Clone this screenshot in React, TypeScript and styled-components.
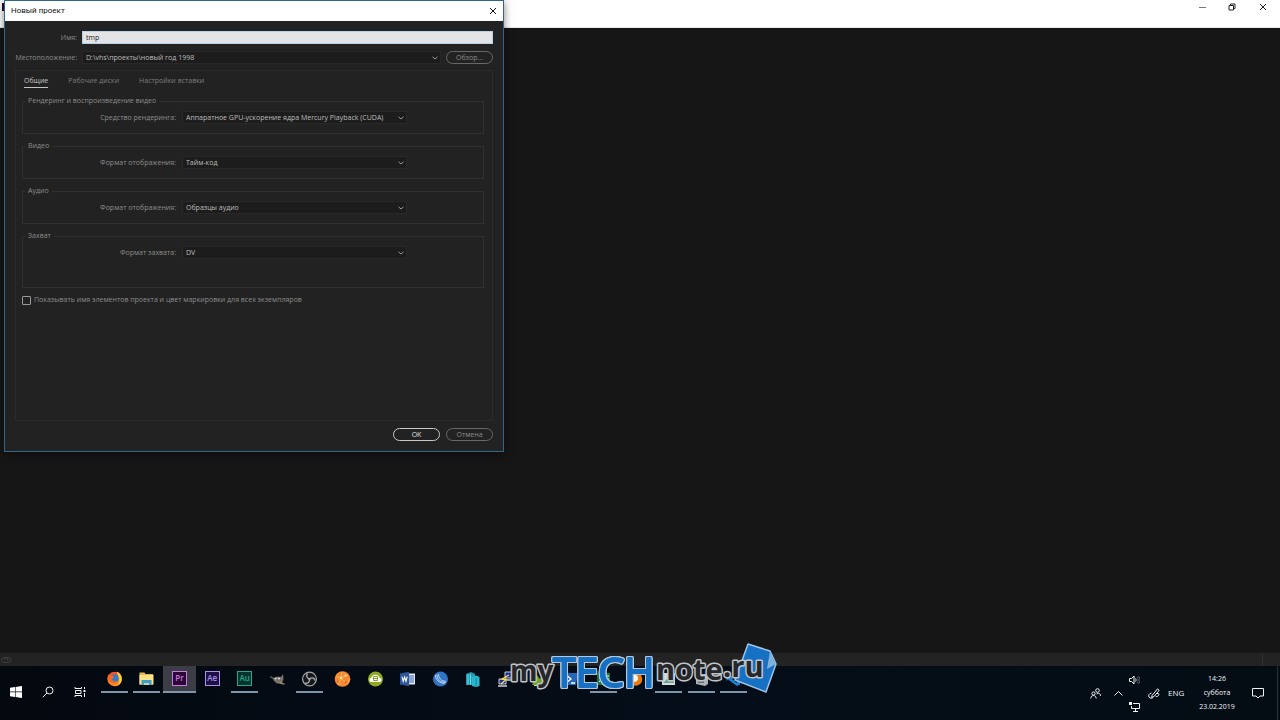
import React from "react";
import styled, { createGlobalStyle } from "styled-components";

const Global = createGlobalStyle`
  * { box-sizing: border-box; }
  body { margin: 0; background: #161616; }
  body, button, input, select {
    font-family: "Open Sans", "Noto Sans", sans-serif;
    font-size: 7px;
    line-height: 10px;
  }
  button { padding: 0; border: 0; background: none; color: inherit; }
`;

const Screen = styled.div`
  position: relative;
  display: flex;
  flex-direction: column;
  min-height: 100vh;
  overflow: hidden;
  background: #161616;
`;

const WindowBar = styled.header`
  display: flex;
  justify-content: space-between;
  height: 28px;
  padding-right: 1px;
  background: #fff;
  border-bottom: 1px solid #e4e8e8;
`;

const AppMark = styled.span`
  width: 8px;
  height: 8px;
  margin: 3px 0 0 2px;
  background: #2a0640;
`;

const WindowControls = styled.div`
  display: flex;
  height: 14px;
`;

const WindowButton = styled.button`
  display: grid;
  place-items: center;
  width: 30px;
  color: #222;

  & + &:last-child { width: 32px; }
`;

const Workspace = styled.main`
  flex: 1;
`;

const StatusBar = styled.div`
  display: flex;
  align-items: center;
  justify-content: space-between;
  height: 13px;
  padding: 0 17px 0 1px;
  background: #232323;
  color: #3c3c3c;
`;

const StatusGrip = styled.span`
  width: 1px;
  height: 13px;
  background: #303030;
`;

const Dialog = styled.section`
  position: absolute;
  top: 0;
  left: 4px;
  width: 500px;
  display: flex;
  flex-direction: column;
  border: 1px solid #35648a;
  background: #222;
  color: #8c8c8c;
  box-shadow: 0 2px 8px rgba(0, 0, 0, 0.5);
`;

const DialogTitle = styled.div`
  display: flex;
  align-items: center;
  justify-content: space-between;
  height: 20px;
  padding: 0 5px 1px 6px;
  background: #fff;
  color: #111;
`;

const TitleText = styled.h1`
  margin: 0;
  font-family: Roboto, "Open Sans", sans-serif;
  font-size: 8px;
  font-weight: 400;
  line-height: 12px;
`;

const CloseButton = styled.button`
  display: grid;
  place-items: center;
  width: 10px;
  height: 12px;
`;

const DialogBody = styled.form`
  display: flex;
  flex-direction: column;
  padding: 10px;
`;

const HeadRow = styled.div`
  display: grid;
  grid-template-columns: 62px 1fr auto;
  column-gap: 5px;
  align-items: center;
  height: 13px;
  margin-bottom: 7px;
`;

const FieldLabel = styled.label`
  text-align: right;
  white-space: nowrap;
`;

const NameInput = styled.input`
  grid-column: 2 / 4;
  width: 100%;
  height: 13px;
  padding: 0 3px;
  border: 1px solid #b4d3ea;
  border-radius: 0;
  outline: 0;
  background: #e4e4e6;
  color: #222;
`;

const SelectBox = styled.div`
  display: grid;
  align-items: center;
  height: 13px;
  color: #999;

  & > * { grid-area: 1 / 1; }
  & > svg { justify-self: end; margin-right: 3px; pointer-events: none; }
`;

const Select = styled.select`
  appearance: none;
  width: 100%;
  height: 13px;
  padding: 0 3px;
  border: 1px solid #282828;
  border-radius: 0;
  outline: 0;
  background: #1c1c1c;
  color: #bdbdbd;
`;

const PillButton = styled.button<{ $primary?: boolean }>`
  width: 47px;
  height: 13px;
  border: 1px solid ${(p) => (p.$primary ? "#c8c8c8" : "#686868")};
  border-radius: 7px;
  color: ${(p) => (p.$primary ? "#e0e0e0" : "#8c8c8c")};
`;

const Panel = styled.div`
  display: flex;
  flex-direction: column;
  min-height: 351px;
  margin-top: -1px;
  padding: 4px 8px 0 6px;
  border: 1px solid #2b2b2b;
`;

const Tabs = styled.div`
  display: flex;
  gap: 20px;
  padding-left: 2px;
  margin-bottom: 8px;
`;

const Tab = styled.button<{ $active?: boolean }>`
  height: 13px;
  border-bottom: 1px solid ${(p) => (p.$active ? "#c4c4c4" : "transparent")};
  color: ${(p) => (p.$active ? "#c4c4c4" : "#7c7c7c")};
`;

const Group = styled.fieldset<{ $tall?: boolean }>`
  min-width: 0;
  height: ${(p) => (p.$tall ? 57 : 38)}px;
  margin: 0 0 7px;
  padding: 5px 0 0;
  border: 1px solid #303030;
`;

const GroupTitle = styled.legend`
  margin-left: 2px;
  padding: 0 3px;
`;

const GroupRow = styled.div`
  display: grid;
  grid-template-columns: 153px 225px;
  column-gap: 6px;
  align-items: center;
`;

const CheckRow = styled.label`
  display: flex;
  align-items: center;
  gap: 3px;
  height: 10px;
`;

const CheckBox = styled.input`
  appearance: none;
  width: 9px;
  height: 9px;
  margin: 0;
  border: 1px solid #999;
  border-radius: 1px;

  &:checked { background: #999; }
`;

const Actions = styled.div`
  display: flex;
  justify-content: flex-end;
  gap: 6px;
  margin-top: 7px;
`;

const Taskbar = styled.footer`
  display: flex;
  justify-content: space-between;
  height: 54px;
  padding-right: 2px;
  background: linear-gradient(90deg, #040910, #050d18 55%, #040c14);
  color: #f0f3f6;
`;

const TaskGroup = styled.div`
  display: flex;
`;

const SystemButton = styled.button`
  display: grid;
  place-items: center;
  width: 32px;
  height: 52px;
`;

const AppGrid = styled.nav`
  display: grid;
  grid-template-columns: repeat(20, 1fr);
  width: 652px;
  height: 27px;
  margin-left: 2px;
`;

const AppButton = styled.button<{ $running?: boolean; $active?: boolean }>`
  display: flex;
  flex-direction: column;
  align-items: center;
  padding-top: 5px;
  background: ${(p) => (p.$active ? "#3b3e44" : "transparent")};

  &::after {
    content: "";
    width: ${(p) => (p.$active ? "100%" : "27px")};
    height: 2px;
    margin-top: auto;
    background: ${(p) => (p.$running ? "#7f95ac" : "transparent")};
  }
`;

const AdobeIcon = styled.span<{ $tint: string; $fill: string }>`
  width: 15px;
  height: 15px;
  border: 1px solid ${(p) => p.$tint};
  background: ${(p) => p.$fill};
  color: ${(p) => p.$tint};
  font-size: 8px;
  font-weight: 600;
  line-height: 12px;
  text-align: center;
`;

const Tray = styled.div`
  display: flex;
  align-items: center;
  height: 54px;
`;

const TrayButton = styled.button<{ $w: number }>`
  display: grid;
  place-items: center;
  width: ${(p) => p.$w}px;
  height: 24px;
  font-size: 8px;
`;

const TrayStack = styled.div`
  display: flex;
  flex-direction: column;
  gap: 3px;
`;

const Clock = styled.time`
  display: flex;
  flex-direction: column;
  gap: 4px;
  width: 50px;
  margin-left: 8px;
  text-align: center;
`;

const TrayEdge = styled.span`
  width: 1px;
  height: 54px;
  margin-left: 3px;
  background: #2b3037;
`;

const Watermark = styled.svg`
  position: absolute;
  left: 506px;
  bottom: 10px;
  pointer-events: none;
`;

const DarkLetters = styled.g`
  fill: #25272b;
  stroke: #c2c5c8;
  stroke-width: 3px;
  stroke-linejoin: round;
  paint-order: stroke;
  font-weight: 700;
`;

const BlueLetters = styled.g`
  fill: #1670c4;
  stroke: #1670c4;
  stroke-width: 2px;
  stroke-linejoin: round;
  filter: drop-shadow(1px 0 0 #b4c8da) drop-shadow(-1px 0 0 #b4c8da) drop-shadow(0 1px 0 #b4c8da) drop-shadow(0 -1px 0 #b4c8da);
`;

const Chevron = () => (
  <svg width="6" height="4" viewBox="0 0 6 4" fill="none" stroke="currentColor" aria-hidden="true">
    <path d="M.5 .8 3 3 5.5 .8" />
  </svg>
);

const Cross = ({ size }: { size: number }) => (
  <svg width={size} height={size} viewBox="0 0 8 8" stroke="currentColor" aria-hidden="true">
    <path d="M1 1l6 6M7 1L1 7" />
  </svg>
);

const Icon = ({ children }: { children: React.ReactNode }) => (
  <svg width="17" height="16" viewBox="0 0 17 16" fill="none" aria-hidden="true">
    {children}
  </svg>
);

const Dropdown = ({ id, value }: { id: string; value: string }) => (
  <SelectBox>
    <Select id={id} defaultValue={value}>
      <option>{value}</option>
    </Select>
    <Chevron />
  </SelectBox>
);

const groups = [
  { id: "render", title: "Рендеринг и воспроизведение видео", label: "Средство рендеринга:", value: "Аппаратное GPU-ускорение ядра Mercury Playback (CUDA)" },
  { id: "video", title: "Видео", label: "Формат отображения:", value: "Тайм-код" },
  { id: "audio", title: "Аудио", label: "Формат отображения:", value: "Образцы аудио" },
  { id: "capture", title: "Захват", label: "Формат захвата:", value: "DV", tall: true },
];

const apps: { name: string; running?: boolean; active?: boolean; icon: React.ReactNode }[] = [
  {
    name: "Firefox",
    running: true,
    icon: (
      <Icon>
        <circle cx="8.500" cy="8" r="7.200" fill="#f4512c" />
        <path d="M2 4.500C.8 9 3 14.800 9 15.200c5-.2 7.500-4.500 6.600-9C15 3.500 13 1.500 11 .8c1.200 2.400 1.500 4 1 6L6 10 2 4.500z" fill="#fb8a22" />
        <path d="M11 .8c3 1.200 5 4 4.800 7.500-.3 3-2 5-4 6 1.800-3 2-6 .8-8.500C12 4 11.200 2.500 11 .8z" fill="#ffd23c" />
        <circle cx="8.700" cy="7.500" r="4" fill="#2c7cd0" />
        <path d="M2 3.500l1.700 1L7 4.800l1 1.500-2 1.500 1 2c2 1.200 3.500.2 4.500-.6-.5 2.500-3 4-5.500 3C2.500 11 1.500 7 2 3.500z" fill="#f36a24" />
      </Icon>
    ),
  },
  {
    name: "Проводник",
    running: true,
    icon: (
      <Icon>
        <path d="M1.500 1.500h5l1 1.500h7.500v10.500h-13.500z" fill="#e9b94b" />
        <path d="M1.500 4h14v9.500h-14z" fill="#fbe08b" />
        <path d="M3.500 14V9h10v5h-2.500v-2H6v2z" fill="#3e9fc4" />
        <path d="M6 12h5v2H6z" fill="#b9d9b6" />
      </Icon>
    ),
  },
  { name: "Premiere Pro", running: true, active: true, icon: <AdobeIcon $tint="#c77be0" $fill="#2d0638">Pr</AdobeIcon> },
  { name: "After Effects", icon: <AdobeIcon $tint="#a794ea" $fill="#1d1045">Ae</AdobeIcon> },
  { name: "Audition", running: true, icon: <AdobeIcon $tint="#24a78a" $fill="#04332f">Au</AdobeIcon> },
  {
    name: "GIMP",
    icon: (
      <Icon>
        <path d="M1 5l4 2 3-1.500L12 6l2-3 .5 5-1.500 4-5 .5L5 10 4 8 1 6z" fill="#77746d" />
        <path d="M9 12l3-1 4 2-1 .8z" fill="#b08b65" />
        <circle cx="6.500" cy="7.500" r="1" fill="#ddd" />
        <circle cx="10" cy="7.500" r="1" fill="#ddd" />
      </Icon>
    ),
  },
  {
    name: "OBS",
    running: true,
    icon: (
      <Icon>
        <circle cx="8.500" cy="8" r="6.900" fill="#15171a" stroke="#a4a6a8" strokeWidth="1.200" />
        <path d="M8.500 8C5.500 7 5 4.500 6.500 2.500M8.500 8c2.500-2 5-1.200 5.700 1.500M8.500 8c.4 3-1.500 4.800-4.500 4.200" stroke="#a4a6a8" strokeWidth="1.400" />
        <circle cx="8.500" cy="8" r="1.200" fill="#a4a6a8" />
      </Icon>
    ),
  },
  {
    name: "Глобус",
    icon: (
      <Icon>
        <circle cx="8.500" cy="8" r="7.800" fill="#f58a35" />
        <path d="M2 5l5 2 1-6M7 7l7-3M7 7l-3 7M7 7l6 6 3-5" stroke="#ffc35c" strokeWidth=".7" />
        <circle cx="7" cy="7" r="1.200" fill="#ffe79b" />
        <circle cx="12" cy="11.500" r="1.100" fill="#e35a2b" />
        <circle cx="4" cy="10.500" r="1" fill="#e35a2b" />
        <circle cx="11.500" cy="4.500" r="1" fill="#ffe79b" />
      </Icon>
    ),
  },
  {
    name: "Облако",
    icon: (
      <Icon>
        <circle cx="8.500" cy="8" r="7.500" fill="#8eaa22" />
        <path d="M4.500 11a2.100 2.100 0 0 1-.2-4.200A4.300 4.300 0 0 1 12.500 6.800a2.100 2.100 0 0 1 0 4.200z" fill="#fff" />
        <path d="M6.500 5.500h4v4h-4zM6.500 7.500h4" stroke="#7c991a" strokeWidth=".9" />
      </Icon>
    ),
  },
  {
    name: "Word",
    icon: (
      <Icon>
        <path d="M8 2.500h8v11H8z" fill="#dfe8f6" />
        <path d="M10 5h5M10 7h5M10 9h5M10 11h5" stroke="#3c62a8" />
        <path d="M1 2.500l9-1.800v14.600l-9-1.800z" fill="#2b579a" />
        <path d="M3 5.700l1.200 4.600L5.600 6l1.400 4.300L8.200 5.700" stroke="#fff" strokeWidth="1.100" />
      </Icon>
    ),
  },
  {
    name: "Проигрыватель",
    icon: (
      <Icon>
        <circle cx="8.500" cy="8" r="7.500" fill="#3174c6" />
        <path d="M3.500 4c0 5 3.500 8 9 8.500M6.500 3c0 4 2.500 6.800 7.500 7.500M5 3.500c0 5 3 7.500 8.500 8" stroke="#cfe4fa" strokeWidth=".9" />
      </Icon>
    ),
  },
  {
    name: "Серверы",
    icon: (
      <Icon>
        <path d="M2 3l5-2 4 2v11H2z" fill="#1f9db5" />
        <path d="M4 3.500v10M6.500 3.500v10" stroke="#75d7e4" />
        <path d="M8 6l4-1.500L15.500 6v9L12 16l-4-1z" fill="#27b8cf" />
        <path d="M12 7v8" stroke="#137e93" />
      </Icon>
    ),
  },
  {
    name: "PuTTY",
    icon: (
      <Icon>
        <path d="M8 1h7v6H8zM2 8h7v5H2z" fill="#1c2ea0" stroke="#c9ccd2" />
        <path d="M1 15h9M9 9h7" stroke="#c9ccd2" strokeWidth="1.500" />
        <path d="M12 4L5 8l4 .5L4 13" stroke="#f6e04a" strokeWidth="1.300" />
      </Icon>
    ),
  },
  { name: "Редактор", icon: <Icon><path d="M2 14L7 4l3 4 4-4 2 10z" fill="#6ea323" /><path d="M4 14h9v1H4z" fill="#c9dc67" /></Icon> },
  { name: "PowerShell", icon: <Icon><path d="M3 2h13l-2 12H1z" fill="#2467bb" /><path d="M5 4.500l4 3.500-5 4M9 12h4" stroke="#fff" strokeWidth="1.300" /></Icon> },
  { name: "Excel", running: true, icon: <Icon><path d="M2 2h13v12H2z" fill="#1a7340" /><path d="M4 5l5 6M9 5l-5 6M11 5h3M11 8h3M11 11h3" stroke="#fff" /></Icon> },
  { name: "Медиа", icon: <Icon><circle cx="8.500" cy="8" r="6.800" fill="#e87b18" /><path d="M4 5c3-3 7-1 7 2s-2 4-5 4z" fill="#fff3dc" /></Icon> },
  { name: "Просмотр", running: true, icon: <Icon><path d="M2 2h13v12H2z" fill="#d5dadd" /><path d="M3 12l4-4 3 2 4-4v6z" fill="#68a38c" /></Icon> },
  { name: "Диск", running: true, icon: <Icon><path d="M4 3h9l2 3v7l-3 2-9-2V5z" fill="#aeb1b3" /><path d="M5 8h6M5 11h6" stroke="#55595c" strokeWidth="1.300" /></Icon> },
  { name: "Код", running: true, icon: <Icon><path d="M12 1l3 1.500v11L12 15 3 8.500 1.500 10V6L3 7.500z" fill="#1b82cf" /><path d="M12 4v8L7 8z" fill="#071019" /></Icon> },
];

export default function App() {
  return (
    <Screen>
      <Global />
      <WindowBar>
        <AppMark />
        <WindowControls>
          <WindowButton aria-label="Свернуть">
            <svg width="7" height="8" viewBox="0 0 7 8" stroke="#777"><path d="M0 4.500h7" /></svg>
          </WindowButton>
          <WindowButton aria-label="Восстановить">
            <svg width="8" height="8" viewBox="0 0 8 8" fill="none" stroke="currentColor">
              <path d="M1 2.500h4.500v4.500H1zM2.500 2.500v-1.500h4.500v4.500H5.500" />
            </svg>
          </WindowButton>
          <WindowButton aria-label="Закрыть"><Cross size={8} /></WindowButton>
        </WindowControls>
      </WindowBar>

      <Workspace />

      <StatusBar>
        <svg width="11" height="8" viewBox="0 0 11 8" fill="none" stroke="currentColor" aria-hidden="true">
          <path d="M3 6.500a2.500 2.500 0 0 1 0-5h4.500a2.500 2.500 0 0 1 0 5zM3 4a2 2 0 0 1 4 0v2" />
        </svg>
        <StatusGrip />
      </StatusBar>

      <Taskbar>
        <TaskGroup>
          <SystemButton aria-label="Пуск">
            <svg width="12" height="12" viewBox="0 0 12 12" fill="#fff">
              <path d="M0 1.700l5-.7v4.600H0zM5.600.9L12 0v5.600H5.600zM0 6.300h5v4.600l-5-.7zM5.600 6.300H12V12l-6.400-.9z" />
            </svg>
          </SystemButton>
          <SystemButton aria-label="Поиск">
            <svg width="12" height="12" viewBox="0 0 12 12" fill="none" stroke="currentColor">
              <circle cx="7.500" cy="4.500" r="3.500" /><path d="M5 7L.8 11.200" />
            </svg>
          </SystemButton>
          <SystemButton aria-label="Представление задач">
            <svg width="12" height="12" viewBox="0 0 12 12" fill="none" stroke="currentColor">
              <path d="M1 1v1.500h6.500V1M1 11V9.500h6.500V11M1.500 4.500H7v3H1.500zM10.500 1v2M10.500 7v4" />
              <path d="M9.500 4h2v2h-2z" fill="currentColor" stroke="none" />
            </svg>
          </SystemButton>
          <AppGrid>
            {apps.map((a) => (
              <AppButton key={a.name} aria-label={a.name} $running={a.running} $active={a.active}>
                {a.icon}
              </AppButton>
            ))}
          </AppGrid>
        </TaskGroup>

        <Tray>
          <TrayButton $w={24} aria-label="Люди">
            <svg width="11" height="11" viewBox="0 0 11 11" fill="none" stroke="currentColor">
              <circle cx="7.500" cy="2.500" r="1.800" /><circle cx="3.500" cy="5.500" r="1.600" />
              <path d="M.8 10.500c0-4 5.400-4 5.400 0M6.500 6c2-1.500 4-.5 4 2" />
            </svg>
          </TrayButton>
          <TrayButton $w={22} aria-label="Скрытые значки">
            <svg width="9" height="5" viewBox="0 0 9 5" fill="none" stroke="currentColor"><path d="M.5 4.500l4-4 4 4" /></svg>
          </TrayButton>
          <TrayStack>
            <TrayButton $w={11} aria-label="Громкость">
              <svg width="11" height="10" viewBox="0 0 11 10" fill="none" stroke="currentColor">
                <path d="M.5 3.500h2l2.500-2.500v8L2.500 6.500h-2z" /><path d="M6.500 3.500c.8 1 .8 2 0 3" />
                <path d="M8 2c1.500 2 1.500 4 0 6M9.500 1c2 3 2 5 0 8" stroke="#59616a" />
              </svg>
            </TrayButton>
            <TrayButton $w={11} aria-label="Сеть">
              <svg width="11" height="10" viewBox="0 0 11 10" fill="none" stroke="currentColor">
                <path d="M4 1.500h6.500v5h-8V4M6.500 6.500v3M4 9.500h5" />
                <path d="M0 0h3v3H0z" fill="currentColor" stroke="none" />
              </svg>
            </TrayButton>
          </TrayStack>
          <TrayButton $w={28} aria-label="Перо">
            <svg width="12" height="11" viewBox="0 0 12 11" fill="none" stroke="currentColor">
              <path d="M4 7.500L9.500.8l1.700 1.500L6 8.500l-2.300.8zM3.500 5C1 5.500 0 7.500 1 9s3 1.500 4 .5M9 5.500c2-.5 2.500.8 1.500 2S8 9 7.500 8" />
            </svg>
          </TrayButton>
          <TrayButton $w={16} aria-label="Язык ввода">ENG</TrayButton>
          <Clock dateTime="2019-02-23T14:26">
            <span>14:26</span>
            <span>суббота</span>
            <span>23.02.2019</span>
          </Clock>
          <TrayButton $w={32} aria-label="Уведомления">
            <svg width="12" height="12" viewBox="0 0 12 12" fill="none" stroke="currentColor">
              <path d="M.5 1.500h11v7.500H8L6 11 4 9H.5z" />
            </svg>
          </TrayButton>
          <TrayEdge />
        </Tray>
      </Taskbar>

      <Dialog role="dialog" aria-labelledby="dialog-title">
        <DialogTitle>
          <TitleText id="dialog-title">Новый проект</TitleText>
          <CloseButton aria-label="Закрыть диалог"><Cross size={8} /></CloseButton>
        </DialogTitle>
        <DialogBody onSubmit={(e) => e.preventDefault()}>
          <HeadRow>
            <FieldLabel htmlFor="name">Имя:</FieldLabel>
            <NameInput id="name" defaultValue="tmp" />
          </HeadRow>
          <HeadRow>
            <FieldLabel htmlFor="location">Местоположение:</FieldLabel>
            <Dropdown id="location" value="D:\vhs\проекты\новый год 1998" />
            <PillButton type="button">Обзор...</PillButton>
          </HeadRow>
          <Panel>
            <Tabs role="tablist">
              <Tab type="button" role="tab" aria-selected="true" $active>Общие</Tab>
              <Tab type="button" role="tab">Рабочие диски</Tab>
              <Tab type="button" role="tab">Настройки вставки</Tab>
            </Tabs>
            {groups.map((g) => (
              <Group key={g.id} $tall={g.tall}>
                <GroupTitle>{g.title}</GroupTitle>
                <GroupRow>
                  <FieldLabel htmlFor={g.id}>{g.label}</FieldLabel>
                  <Dropdown id={g.id} value={g.value} />
                </GroupRow>
              </Group>
            ))}
            <CheckRow>
              <CheckBox type="checkbox" />
              Показывать имя элементов проекта и цвет маркировки для всех экземпляров
            </CheckRow>
          </Panel>
          <Actions>
            <PillButton type="submit" $primary>OK</PillButton>
            <PillButton type="button">Отмена</PillButton>
          </Actions>
        </DialogBody>
      </Dialog>

      <Watermark width="280" height="80" viewBox="506 630 280 80" role="img" aria-label="myTECHnote.ru">
        <path d="M748 644l22 7 6 13-10 28-31-12z" fill="#1670c4" stroke="#9cc4e6" strokeWidth="1.500" strokeLinejoin="round" />
        <path d="M770 651l6 13-9 5z" fill="#7db0dc" />
        <g fontFamily="Open Sans, Noto Sans, sans-serif">
          <DarkLetters>
            <text x="510" y="681" fontSize="28">my</text>
            <text x="656" y="680" fontSize="29">note</text>
            <text x="723" y="677" fontSize="29">.ru</text>
          </DarkLetters>
          <BlueLetters>
            <text x="553" y="687" fontSize="41">TECH</text>
          </BlueLetters>
        </g>
      </Watermark>
    </Screen>
  );
}
